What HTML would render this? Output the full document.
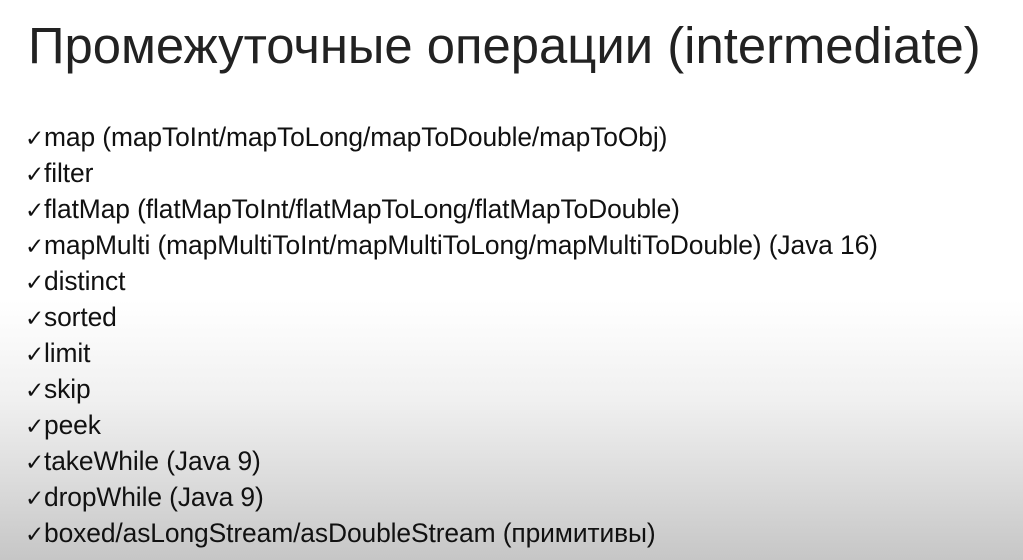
<!DOCTYPE html>
<html><head><meta charset="utf-8"><style>
html,body{margin:0;padding:0}
body{width:1023px;height:560px;overflow:hidden;position:relative;
background:linear-gradient(to bottom,#fff 0px,#fff 300px,#f0f0f0 400px,#dcdcdc 480px,#c6c6c6 560px);
font-family:"Liberation Sans",sans-serif;color:#111}
.t{position:absolute;left:28px;top:16px;font-size:50.8px;white-space:nowrap;color:#222}
.l{position:absolute;left:25px;font-size:26.4px;white-space:nowrap;line-height:28px;letter-spacing:-0.1px}
.l b{font-weight:normal;font-size:23px;display:inline-block;width:19px}
</style></head><body>
<div class="t">Промежуточные операции (intermediate)</div>
<div class="l" style="top:123px"><b>✓</b>map (mapToInt/mapToLong/mapToDouble/mapToObj)</div>
<div class="l" style="top:159px"><b>✓</b>filter</div>
<div class="l" style="top:195px"><b>✓</b>flatMap (flatMapToInt/flatMapToLong/flatMapToDouble)</div>
<div class="l" style="top:231px"><b>✓</b>mapMulti (mapMultiToInt/mapMultiToLong/mapMultiToDouble) (Java 16)</div>
<div class="l" style="top:267px"><b>✓</b>distinct</div>
<div class="l" style="top:303px"><b>✓</b>sorted</div>
<div class="l" style="top:339px"><b>✓</b>limit</div>
<div class="l" style="top:375px"><b>✓</b>skip</div>
<div class="l" style="top:411px"><b>✓</b>peek</div>
<div class="l" style="top:447px"><b>✓</b>takeWhile (Java 9)</div>
<div class="l" style="top:483px"><b>✓</b>dropWhile (Java 9)</div>
<div class="l" style="top:519px"><b>✓</b>boxed/asLongStream/asDoubleStream (примитивы)</div>
</body></html>
